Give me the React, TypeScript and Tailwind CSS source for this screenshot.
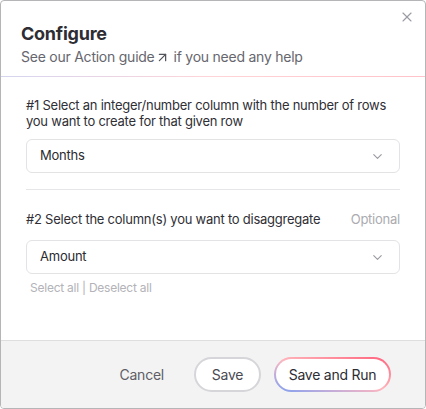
import { ChevronDown, X, ArrowUpRight } from "lucide-react";

const SelectBox = ({ value }: { value: string }) => (
  <div className="flex h-[34px] w-full items-center justify-between rounded-md border border-[#e3e3e6] bg-white pl-[13px] pr-[14px] text-[13px] text-[#2b2b30]">
    <span>{value}</span>
    <ChevronDown size={15} strokeWidth={1.8} className="text-[#9a9aa2]" />
  </div>
);

export default function App() {
  return (
    <div className="h-[409px] w-[426px] bg-white font-['Inter',sans-serif] tracking-[-0.015em]">
      <div className="flex h-full w-full flex-col overflow-hidden rounded-[4px] border border-[#b5b5b8] bg-white">
        {/* header */}
        <div className="relative px-5 pt-[20px] pb-[10px]">
          <button className="absolute right-[10px] top-[8px] text-[#9b9ba3]">
            <X size={16} strokeWidth={1.6} />
          </button>
          <h1 className="text-[18px] font-bold leading-[26px] text-[#2d2d33]">Configure</h1>
          <p className="mt-[1px] flex items-center text-[14px] leading-[18px] text-[#66666e]">
            See our Action guide
            <ArrowUpRight size={15} strokeWidth={2} className="mr-[4px] text-[#55555d]" />
            if you need any help
          </p>
        </div>
        <div className="h-px w-full bg-gradient-to-r from-[#d4d4f0] via-[#ffd4d8] to-[#ffc2c8]" />

        {/* body */}
        <div className="flex flex-1 flex-col px-[25px] pt-[20px]">
          <p className="text-[13px] leading-[16px] text-[#2f2f35]">
            #1 Select an integer/number column with the number of rows you want to create for that given row
          </p>
          <div className="mt-[10px]">
            <SelectBox value="Months" />
          </div>
          <div className="mt-[16px] h-px w-full bg-[#e6e6e8]" />
          <div className="mt-[21px] flex items-center justify-between text-[13px] leading-[16px]">
            <span className="text-[#2f2f35]">#2 Select the column(s) you want to disaggregate</span>
            <span className="text-[#ababb0]">Optional</span>
          </div>
          <div className="mt-[13px]">
            <SelectBox value="Amount" />
          </div>
          <p className="mt-[6px] pl-[4px] text-[12px] leading-[16px] text-[#b3b3b8]">
            Select all | Deselect all
          </p>
        </div>

        {/* footer */}
        <div className="flex h-[68px] items-center justify-end gap-[13px] border-t border-[#dedee0] bg-[#f3f3f3] pr-[34px]">
          <button className="mr-[17px] text-[14px] text-[#5e5e66]">Cancel</button>
          <button className="h-[35px] w-[67px] rounded-full border-2 border-[#d6d6da] bg-white text-[14px] text-[#4a4a52]">
            Save
          </button>
          <div className="rounded-full bg-gradient-to-tr from-[#7c9ef2] via-[#ffb5bd] to-[#ff5d7a] p-[2px]">
            <button className="h-[31px] w-[113px] rounded-full bg-white text-[14px] text-[#2d2d33]">
              Save and Run
            </button>
          </div>
        </div>
      </div>
    </div>
  );
}
